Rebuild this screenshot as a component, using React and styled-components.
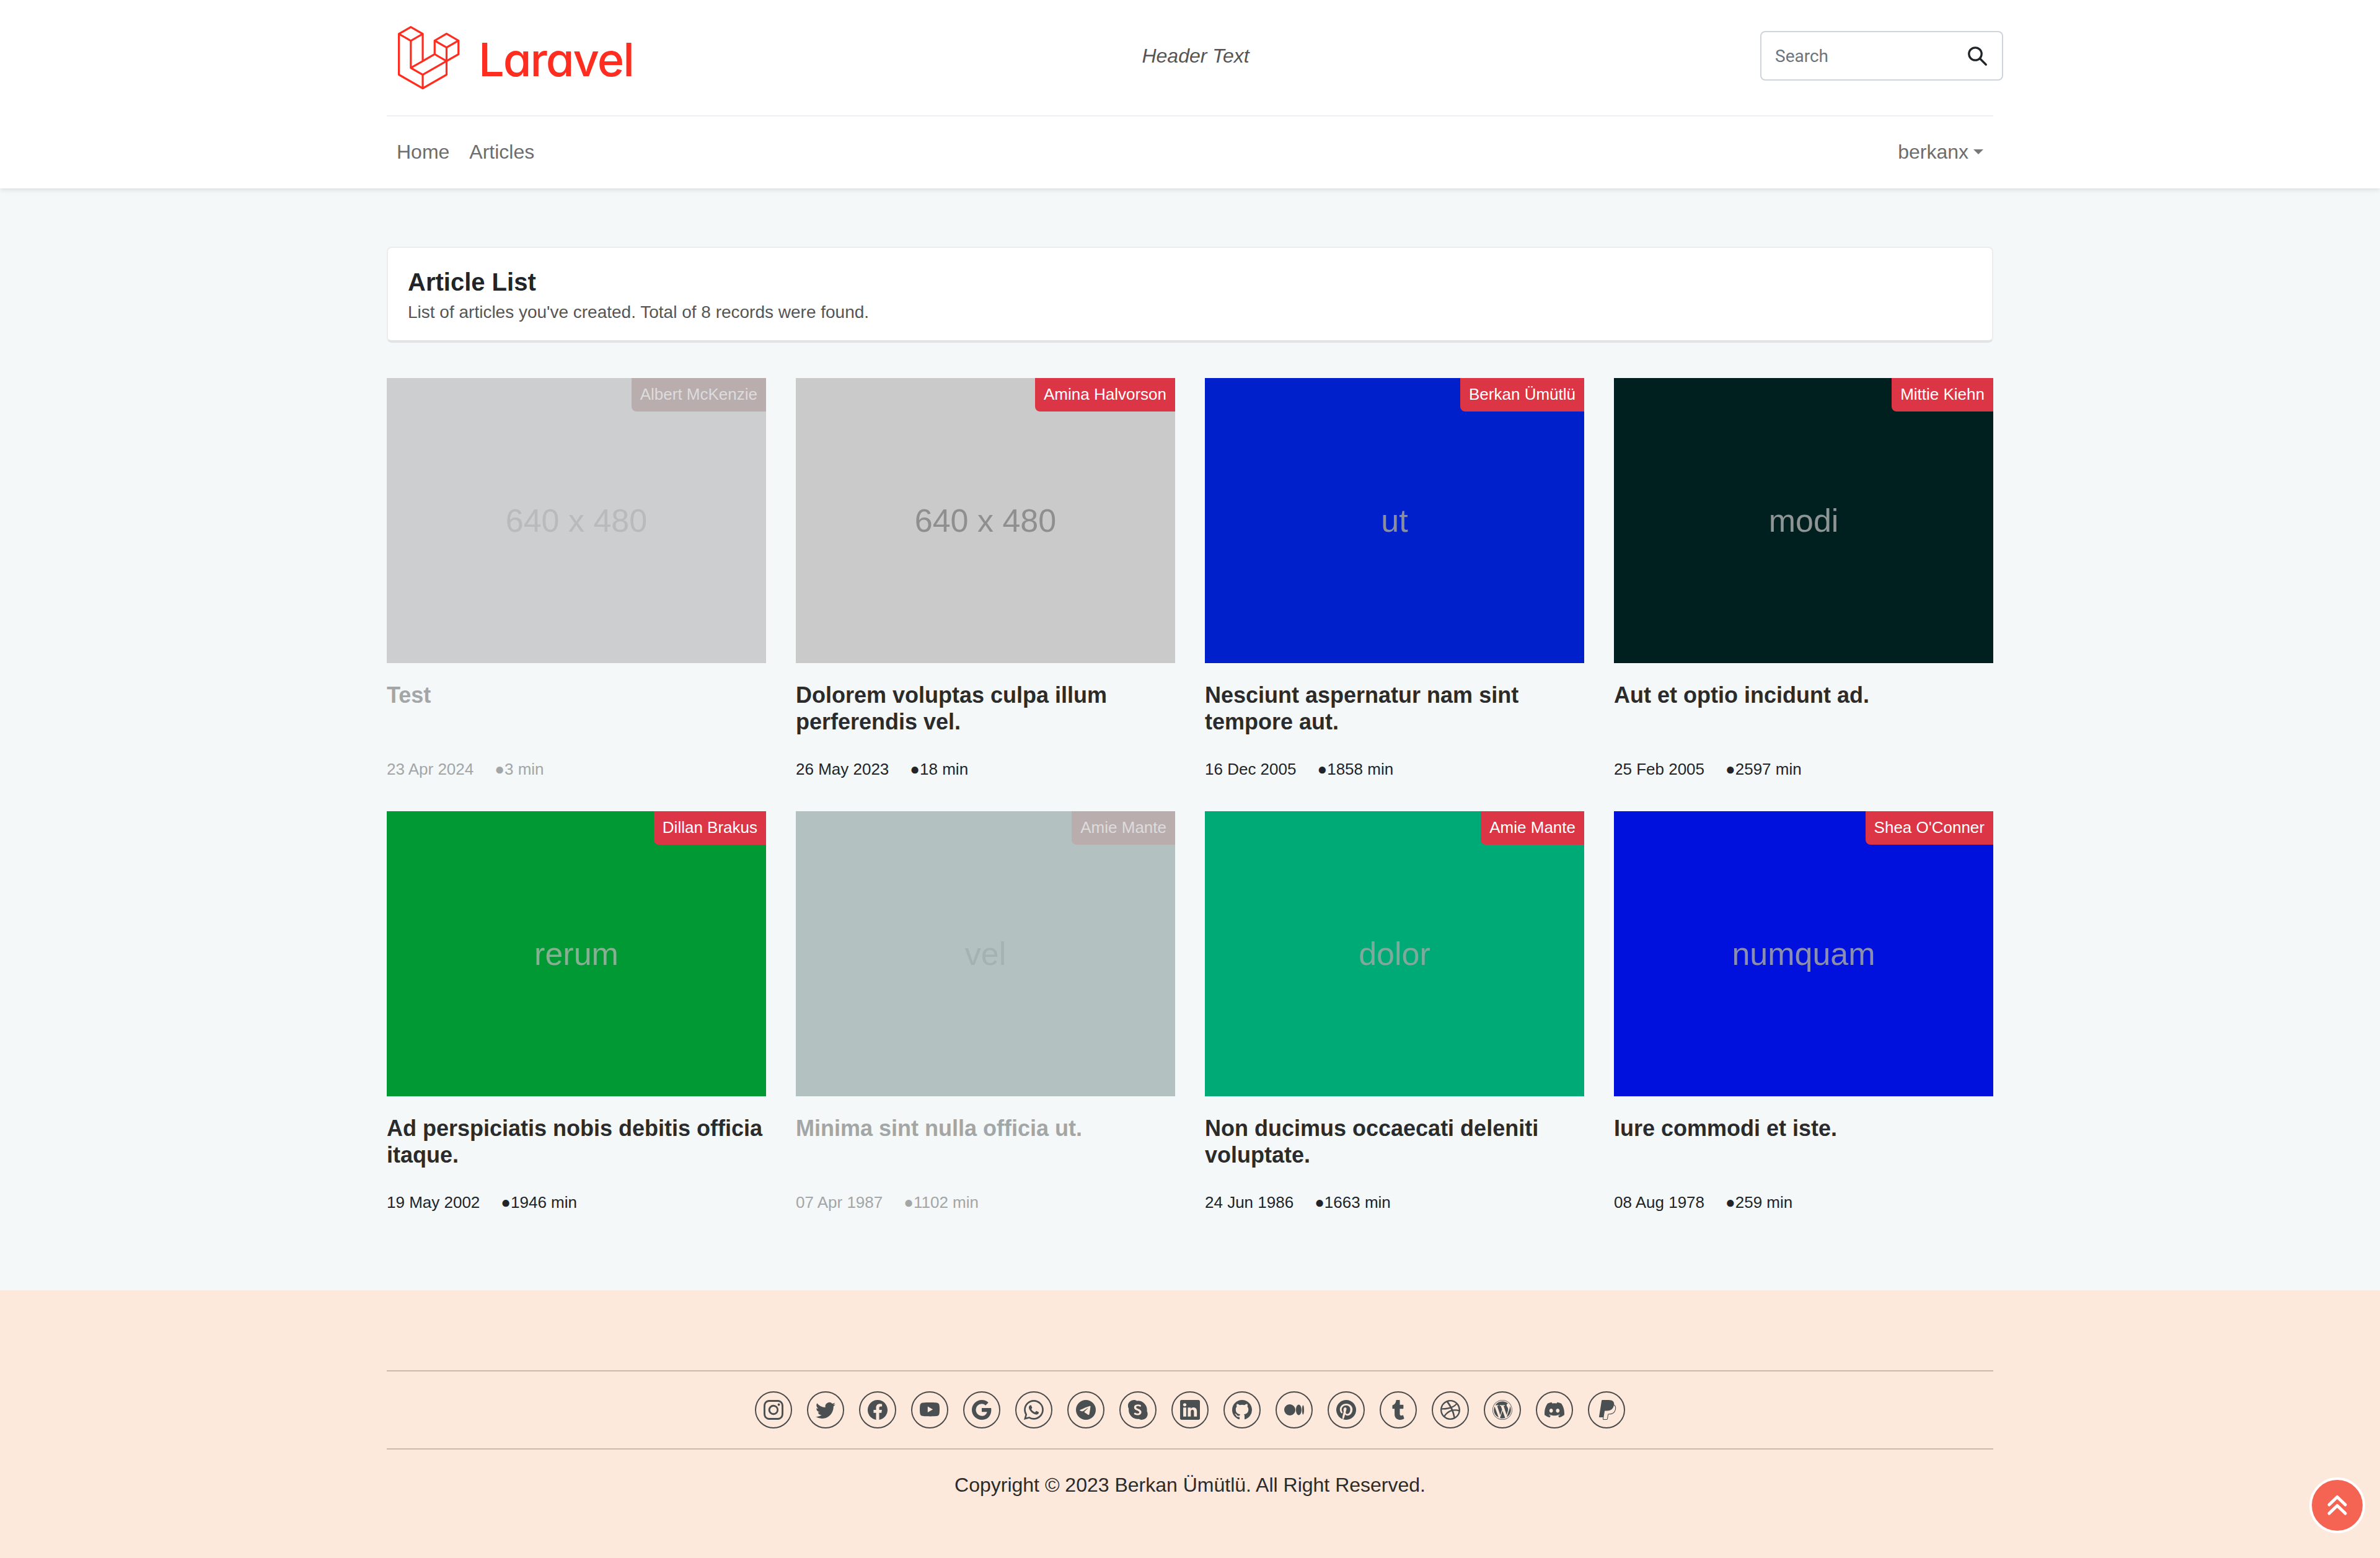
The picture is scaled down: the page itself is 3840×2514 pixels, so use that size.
import React from 'react';
import styled, { createGlobalStyle } from 'styled-components';
import {
  BsInstagram, BsTwitter, BsFacebook, BsYoutube, BsGoogle, BsWhatsapp, BsTelegram, BsSkype,
  BsLinkedin, BsGithub, BsMedium, BsPinterest, BsDribbble, BsWordpress, BsDiscord, BsPaypal
} from 'react-icons/bs';
import { FaTumblr } from 'react-icons/fa';

const GlobalStyle = createGlobalStyle`
  * { box-sizing: border-box; }
  body {
    margin: 0;
    background: #f4f8f9;
    font-family: "Liberation Sans", Arial, sans-serif;
    font-size: 32px;
    color: #212529;
  }
`;

const Container = styled.div`
  width: 2592px;
  margin: 0 auto;
`;

const Header = styled.header`
  background: #fff;
  height: 304px;
  box-shadow: 0 2px 8px rgba(0, 0, 0, 0.12);
`;

const TopRow = styled.div`
  height: 188px;
  display: grid;
  grid-template-columns: 1fr auto 1fr;
  align-items: center;
  border-bottom: 2px solid #edf1f5;
  padding: 0 0 0 18px;
`;

const Brand = styled.a`
  display: flex;
  align-items: center;
  gap: 30px;
  color: #ff2d20;
  margin-top: 2px;
`;

const BrandName = styled.span`
  font-family: Inter, sans-serif;
  font-feature-settings: "cv11";
  font-size: 74px;
  font-weight: 500;
  line-height: 1;
  letter-spacing: -2px;
  margin-top: 4px;
`;

const HeaderText = styled.em`
  color: #555;
  font-size: 32px;
  margin-top: -6px;
`;

const SearchBox = styled.div`
  justify-self: end;
  width: 392px;
  height: 80px;
  margin: -6px -16px 0 0;
  border: 2px solid #ced4da;
  border-radius: 8px;
  padding: 0 22px;
  display: flex;
  align-items: center;
  justify-content: space-between;
  background: #fff;
  color: #212529;
`;

const SearchPlaceholder = styled.span`
  font-family: Roboto, sans-serif;
  font-size: 28px;
  color: #6c757d;
`;

const NavRow = styled.nav`
  height: 114px;
  display: flex;
  align-items: center;
  justify-content: space-between;
  color: #6d6d6d;
  padding: 0 16px;
`;

const NavLinks = styled.div`
  display: flex;
  gap: 32px;
`;

const UserMenu = styled.div`
  display: flex;
  align-items: center;
  gap: 8px;
`;

const Caret = styled.span`
  width: 0;
  height: 0;
  border-left: 8px solid transparent;
  border-right: 8px solid transparent;
  border-top: 8px solid #777;
`;

const Main = styled.main`
  padding: 94px 0 0;
  height: 1778px;
`;

const TitleCard = styled.section`
  height: 155px;
  background: #fff;
  border: 2px solid #ebeded;
  border-bottom: 4px solid #e2e3e3;
  border-radius: 8px;
  padding: 31px 32px 0;
`;

const PageTitle = styled.h1`
  margin: 0 0 4px;
  font-size: 40px;
  line-height: 48px;
  font-weight: 700;
  color: #212529;
`;

const PageSub = styled.p`
  margin: 0;
  font-size: 28px;
  line-height: 42px;
  color: #555;
`;

const Grid = styled.div`
  margin-top: 57px;
  display: grid;
  grid-template-columns: repeat(4, 612px);
  gap: 48px;
`;

const Card = styled.article`
  position: relative;
  color: ${p => (p.$faded ? '#a3a6a7' : '#212529')};
`;

const Thumb = styled.div`
  height: 460px;
  background: ${p => p.$bg};
  color: ${p => p.$fg};
  font-size: 52px;
  display: flex;
  align-items: center;
  justify-content: center;
`;

const Author = styled.span`
  position: absolute;
  top: 0;
  right: 0;
  height: 54px;
  line-height: 52px;
  padding: 0 14px;
  font-size: 26px;
  border-bottom-left-radius: 8px;
  background: ${p => (p.$faded ? '#baadae' : '#dc3545')};
  color: ${p => (p.$faded ? '#dcdcdc' : '#fff')};
`;

const CardTitle = styled.h2`
  margin: 30px 0 36px;
  height: 86px;
  font-size: 36px;
  line-height: 43px;
  font-weight: 700;
  color: ${p => (p.$faded ? '#a3a6a7' : '#2b2b2b')};
`;

const Meta = styled.div`
  display: flex;
  gap: 34px;
  font-size: 26px;
  line-height: 39px;
`;

const Footer = styled.footer`
  background: #fde8dc;
  height: 432px;
  padding-top: 129px;
  text-align: center;
  color: #2b2b2b;
`;

const SocialRow = styled.div`
  display: flex;
  justify-content: center;
  gap: 24px;
  padding: 32px 0;
  border-top: 2px solid #c9b9af;
  border-bottom: 2px solid #c9b9af;
`;

const SocialIcon = styled.a`
  width: 60px;
  height: 60px;
  border: 2px solid #4a4a4a;
  border-radius: 50%;
  display: flex;
  align-items: center;
  justify-content: center;
  color: #4a4f51;
  font-size: 32px;
`;

const Copyright = styled.p`
  margin: 38px 0 0;
  font-size: 32px;
  line-height: 38px;
`;

const BackToTop = styled.a`
  position: fixed;
  right: 24px;
  bottom: 40px;
  width: 90px;
  height: 90px;
  border-radius: 50%;
  border: 4px solid #fff;
  background: #f56452;
  color: #fff;
  display: flex;
  align-items: center;
  justify-content: center;
`;

const LaravelMark = () => (
  <svg width="100" height="104" viewBox="0 0 50 52" fill="currentColor">
    <path d="M49.626 11.564a.809.809 0 0 1 .028.209v10.972a.8.8 0 0 1-.402.694l-9.209 5.302V39.25c0 .286-.152.55-.4.694L20.42 51.01c-.044.025-.092.041-.14.058-.018.006-.035.017-.054.022a.805.805 0 0 1-.41 0c-.022-.006-.042-.018-.063-.026-.044-.016-.09-.03-.132-.054L.402 39.944A.801.801 0 0 1 0 39.25V6.334c0-.072.01-.142.028-.21.006-.023.02-.044.028-.067.015-.042.029-.085.051-.124.015-.026.037-.047.055-.071.023-.032.044-.065.071-.093.023-.023.053-.04.079-.06.029-.024.055-.05.088-.069h.001l9.61-5.533a.802.802 0 0 1 .8 0l9.61 5.533h.002c.032.02.059.045.088.068.026.02.055.038.078.06.028.029.048.062.072.094.017.024.04.045.054.071.023.04.036.082.052.124.008.023.022.044.028.068a.809.809 0 0 1 .028.209v20.559l8.008-4.611v-10.51c0-.07.01-.141.028-.208.007-.024.02-.045.028-.068.016-.042.03-.085.052-.124.015-.026.037-.047.054-.071.024-.032.044-.065.072-.093.023-.023.052-.04.078-.06.03-.024.056-.05.088-.069h.001l9.611-5.533a.801.801 0 0 1 .8 0l9.61 5.533c.034.02.06.045.09.068.025.02.054.038.077.06.028.029.048.062.072.094.018.024.04.045.054.071.023.039.036.082.052.124.009.023.022.044.028.068zm-1.574 10.718v-9.124l-3.363 1.936-4.646 2.675v9.124l8.01-4.611zm-9.61 16.505v-9.13l-4.57 2.61-13.05 7.448v9.216l17.62-10.144zM1.602 7.719v31.068L19.22 48.93v-9.214l-9.204-5.209-.003-.002-.004-.002c-.031-.018-.057-.044-.086-.066-.025-.02-.054-.036-.076-.058l-.002-.003c-.026-.025-.044-.056-.066-.084-.02-.027-.044-.05-.06-.078l-.001-.003c-.018-.03-.029-.066-.042-.1-.013-.03-.03-.058-.038-.09v-.001c-.01-.038-.012-.078-.016-.117-.004-.03-.012-.06-.012-.09v-.002-21.481L4.965 9.654 1.602 7.72zm8.81-5.994L2.405 6.334l8.005 4.609 8.006-4.61-8.006-4.608zm4.164 28.764l4.645-2.674V7.719l-3.363 1.936-4.646 2.675v20.096l3.364-1.937zM39.243 7.164l-8.006 4.609 8.006 4.609 8.005-4.61-8.005-4.608zm-.801 10.605l-4.646-2.675-3.363-1.936v9.124l4.645 2.674 3.364 1.937v-9.124zM20.02 38.33l11.743-6.704 5.87-3.35-8-4.606-9.211 5.303-8.395 4.833 7.993 4.524z" />
  </svg>
);

const SearchIcon = () => (
  <svg width="36" height="36" viewBox="0 0 24 24" fill="none" stroke="currentColor" strokeWidth="2.2" strokeLinecap="round">
    <circle cx="10" cy="10" r="6.8" />
    <path d="M15 15l6.5 6.5" />
  </svg>
);

const DoubleUp = () => (
  <svg width="36" height="36" viewBox="0 0 36 36" fill="none" stroke="currentColor" strokeWidth="5" strokeLinecap="round" strokeLinejoin="round">
    <path d="M5 17L18 4.5L31 17" />
    <path d="M5 31L18 18.5L31 31" />
  </svg>
);

const articles = [
  { author: 'Albert McKenzie', label: '640 x 480', bg: '#cdced0', fg: '#b9babc', title: 'Test', date: '23 Apr 2024', time: '3 min', faded: true },
  { author: 'Amina Halvorson', label: '640 x 480', bg: '#cbcaca', fg: '#8f8f8f', title: 'Dolorem voluptas culpa illum perferendis vel.', date: '26 May 2023', time: '18 min' },
  { author: 'Berkan Ümütlü', label: 'ut', bg: '#0020cc', fg: '#8a8f9a', title: 'Nesciunt aspernatur nam sint tempore aut.', date: '16 Dec 2005', time: '1858 min' },
  { author: 'Mittie Kiehn', label: 'modi', bg: '#002020', fg: '#8f9494', title: 'Aut et optio incidunt ad.', date: '25 Feb 2005', time: '2597 min' },
  { author: 'Dillan Brakus', label: 'rerum', bg: '#009933', fg: '#85b092', title: 'Ad perspiciatis nobis debitis officia itaque.', date: '19 May 2002', time: '1946 min' },
  { author: 'Amie Mante', label: 'vel', bg: '#b3c1c0', fg: '#a6b1b1', title: 'Minima sint nulla officia ut.', date: '07 Apr 1987', time: '1102 min', faded: true },
  { author: 'Amie Mante', label: 'dolor', bg: '#00aa77', fg: '#7fa99b', title: 'Non ducimus occaecati deleniti voluptate.', date: '24 Jun 1986', time: '1663 min' },
  { author: "Shea O'Conner", label: 'numquam', bg: '#0011dd', fg: '#8a8fb0', title: 'Iure commodi et iste.', date: '08 Aug 1978', time: '259 min' }
];

const socials = [
  BsInstagram, BsTwitter, BsFacebook, BsYoutube, BsGoogle, BsWhatsapp, BsTelegram, BsSkype, BsLinkedin,
  BsGithub, BsMedium, BsPinterest, FaTumblr, BsDribbble, BsWordpress, BsDiscord, BsPaypal
];

export default function App() {
  return (
    <>
      <GlobalStyle />
      <Header>
        <Container>
          <TopRow>
            <Brand>
              <LaravelMark />
              <BrandName>Laravel</BrandName>
            </Brand>
            <HeaderText>Header Text</HeaderText>
            <SearchBox>
              <SearchPlaceholder>Search</SearchPlaceholder>
              <SearchIcon />
            </SearchBox>
          </TopRow>
          <NavRow>
            <NavLinks>
              <span>Home</span>
              <span>Articles</span>
            </NavLinks>
            <UserMenu>
              berkanx
              <Caret />
            </UserMenu>
          </NavRow>
        </Container>
      </Header>
      <Main>
        <Container>
          <TitleCard>
            <PageTitle>Article List</PageTitle>
            <PageSub>List of articles you've created. Total of 8 records were found.</PageSub>
          </TitleCard>
          <Grid>
            {articles.map(a => (
              <Card key={a.title} $faded={a.faded}>
                <Thumb $bg={a.bg} $fg={a.fg}>{a.label}</Thumb>
                <Author $faded={a.faded}>{a.author}</Author>
                <CardTitle $faded={a.faded}>{a.title}</CardTitle>
                <Meta>
                  <span>{a.date}</span>
                  <span>●{a.time}</span>
                </Meta>
              </Card>
            ))}
          </Grid>
        </Container>
      </Main>
      <Footer>
        <Container>
          <SocialRow>
            {socials.map((Icon, i) => (
              <SocialIcon key={i}>
                <Icon />
              </SocialIcon>
            ))}
          </SocialRow>
          <Copyright>Copyright © 2023 Berkan Ümütlü. All Right Reserved.</Copyright>
        </Container>
      </Footer>
      <BackToTop>
        <DoubleUp />
      </BackToTop>
    </>
  );
}
